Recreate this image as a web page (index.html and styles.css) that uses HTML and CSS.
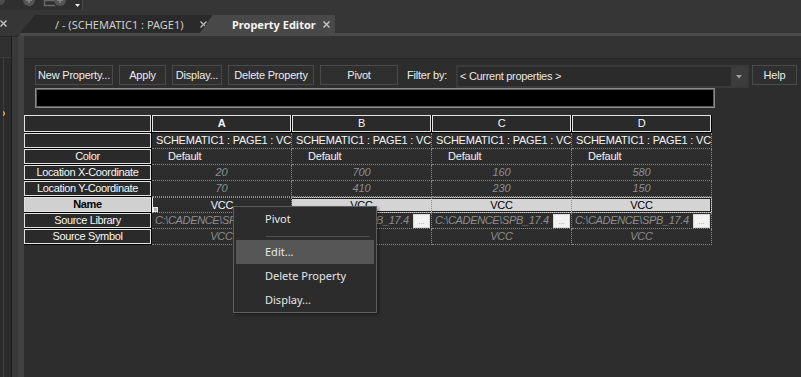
FILE: index.html
```html
<!DOCTYPE html>
<html>
<head>
<meta charset="utf-8">
<link rel="stylesheet" href="styles.css">
</head>
<body>
<div class="top">
  <div class="toolbar">
    <svg width="83" height="10" viewBox="0 0 83 10">
      <rect x="0" y="0" width="82" height="10" fill="#2f2f2f"/>
      <line x1="82.5" y1="0" x2="82.5" y2="10" stroke="#4a4a4a"/>
      <circle cx="0" cy="0" r="5" fill="#4d4d4d"/>
      <circle cx="29" cy="0" r="6" fill="#555"/>
      <path d="M29 -3V3M26 0H32" stroke="#8a8a8a" stroke-width="1.4"/>
      <path d="M55 0.5H44.5V5.5H55" fill="none" stroke="#6a6a6a" stroke-width="1.4"/>
      <circle cx="60" cy="0" r="6" fill="#555"/>
      <path d="M60 -3V3M57 0H63" stroke="#8a8a8a" stroke-width="1.4"/>
      <path d="M75 4H80L77.5 7Z" fill="#e8e8e8"/>
    </svg>
  </div>
  <div class="tabrow">
    <div class="side-close">
      <svg width="7" height="7" viewBox="0 0 7 7"><path d="M0.5 0.5L6.5 6.5M6.5 0.5L0.5 6.5" stroke="#c4c4c4" stroke-width="1.4"/></svg>
    </div>
    <div class="tab tab-doc">
      <span class="tab-label">/ - (SCHEMATIC1 : PAGE1)</span>
      <svg class="tab-x" width="7" height="7" viewBox="0 0 7 7"><path d="M0.5 0.5L6.5 6.5M6.5 0.5L0.5 6.5" stroke="#b8b8b8" stroke-width="1.4"/></svg>
    </div>
    <div class="tab tab-active">
      <span class="tab-label">Property Editor</span>
      <svg class="tab-x" width="7" height="7" viewBox="0 0 7 7"><path d="M0.5 0.5L6.5 6.5M6.5 0.5L0.5 6.5" stroke="#c8c8c8" stroke-width="1.4"/></svg>
    </div>
  </div>
</div>
<div class="tabline"></div>
<div class="workspace">
  <div class="leftpanel">
    <div class="lp-a">
      <div class="lp-a-head"></div>
      <div class="lp-a-body"><span class="lp-frag">P</span></div>
    </div>
    <div class="lp-b"></div>
    <div class="lp-c"></div>
  </div>
  <div class="main">
    <div class="main-head"></div>
    <div class="editor">
      <div class="btnrow">
        <div class="btn w-new">New Property...</div>
        <div class="btn w-apply">Apply</div>
        <div class="btn w-disp">Display...</div>
        <div class="btn w-del">Delete Property</div>
        <div class="btn w-pivot">Pivot</div>
        <div class="filter-label">Filter by:</div>
        <div class="combo">
          <div class="combo-text">&lt; Current properties &gt;</div>
          <div class="combo-arrow"><svg width="6" height="4" viewBox="0 0 6 4"><path d="M0 0H6L3 3.5Z" fill="#a0a0a0"/></svg></div>
        </div>
        <div class="btn w-help">Help</div>
      </div>
      <div class="cmdline"></div>
      <div class="grid">
        <div class="cell rh"></div>
        <div class="cell ch ch-cur">A</div>
        <div class="cell ch">B</div>
        <div class="cell ch">C</div>
        <div class="cell ch">D</div>

        <div class="cell rh"></div>
        <div class="cell d txt">SCHEMATIC1 : PAGE1 : VCC</div>
        <div class="cell d txt">SCHEMATIC1 : PAGE1 : VCC</div>
        <div class="cell d txt">SCHEMATIC1 : PAGE1 : VCC</div>
        <div class="cell d txt">SCHEMATIC1 : PAGE1 : VCC</div>

        <div class="cell rh">Color</div>
        <div class="cell d def">Default</div>
        <div class="cell d def">Default</div>
        <div class="cell d def">Default</div>
        <div class="cell d def">Default</div>

        <div class="cell rh">Location X-Coordinate</div>
        <div class="cell d num">20</div>
        <div class="cell d num">700</div>
        <div class="cell d num">160</div>
        <div class="cell d num">580</div>

        <div class="cell rh">Location Y-Coordinate</div>
        <div class="cell d num">70</div>
        <div class="cell d num">410</div>
        <div class="cell d num">230</div>
        <div class="cell d num">150</div>

        <div class="cell rh rh-sel">Name</div>
        <div class="cell d name-cur">VCC<span class="handle"></span></div>
        <div class="cell d name-sel">VCC</div>
        <div class="cell d name-sel">VCC</div>
        <div class="cell d name-sel name-end">VCC</div>

        <div class="cell rh">Source Library</div>
        <div class="cell d lib"><span class="lib-text">C:\CADENCE\SPB_17.4</span><span class="lib-btn">...</span></div>
        <div class="cell d lib"><span class="lib-text">C:\CADENCE\SPB_17.4</span><span class="lib-btn">...</span></div>
        <div class="cell d lib"><span class="lib-text">C:\CADENCE\SPB_17.4</span><span class="lib-btn">...</span></div>
        <div class="cell d lib"><span class="lib-text">C:\CADENCE\SPB_17.4</span><span class="lib-btn">...</span></div>

        <div class="cell rh">Source Symbol</div>
        <div class="cell d num">VCC</div>
        <div class="cell d num">VCC</div>
        <div class="cell d num">VCC</div>
        <div class="cell d num">VCC</div>
      </div>
    </div>
  </div>
</div>
<div class="ctxmenu">
  <div class="mi">Pivot</div>
  <div class="msep"></div>
  <div class="mi mi-hot">Edit...</div>
  <div class="mi">Delete Property</div>
  <div class="mi">Display...</div>
</div>
</body>
</html>
```

FILE: styles.css
```css
* { box-sizing: border-box; }
html, body { margin: 0; padding: 0; }
body {
  width: 801px;
  height: 377px;
  overflow: hidden;
  background: #363636;
  font-family: "Liberation Sans", Arial, sans-serif;
  position: relative;
}

/* ---------- top strip ---------- */
.top { height: 33px; }
.toolbar { width: 83px; height: 10px; }
.toolbar svg { display: block; }
.tabrow { display: flex; height: 18px; margin-top: 5px; }
.side-close { width: 20px; display: flex; align-items: center; padding-bottom: 2px; }
.side-close svg { display: block; }
.tab {
  display: flex;
  align-items: center;
  font-family: "Noto Sans", "Open Sans", sans-serif;
  font-size: 11px;
  white-space: nowrap;
}
.tab-label { flex: 1; }
.tab-x { display: block; margin-right: 5px; }
.tab-doc {
  width: 192px;
  background: #2a2a2a;
  clip-path: polygon(15px 0, 100% 0, calc(100% - 12px) 100%, 0 100%);
  padding-left: 35px;
  color: #cdcdcd;
}
.tab-active {
  width: 135px;
  margin-left: -12px;
  background: #484848;
  clip-path: polygon(13px 0, 100% 0, 100% 100%, 0 100%);
  padding-left: 32px;
  color: #f4f4f4;
  font-weight: 700;
}
.tabline { height: 3px; margin-left: 20px; background: #4a4a4a; }

/* ---------- workspace ---------- */
.workspace { display: flex; height: 341px; }
.leftpanel { width: 24px; display: flex; }
.lp-a {
  width: 12px;
  display: flex;
  flex-direction: column;
  border-top: 1px solid #252525;
  border-right: 1px solid #1c1c1c;
  background: #2b2b2b;
}
.lp-a-head { height: 21px; border-bottom: 1px solid #3c3c3c; background: #303030; }
.lp-a-body { flex: 1; border-left: 3px solid #2a2a2a; box-shadow: inset 1px 0 0 #3e3e3e; padding-top: 51px; overflow: hidden; }
.lp-frag { display: block; margin-left: -5px; font-size: 11px; line-height: 12px; color: #d8d8d8; }
.lp-b { width: 6px; background: #393939; border-top: 1px solid #2a2a2a; }
.lp-c { width: 6px; background: #424242; }

.main { flex: 1; display: flex; flex-direction: column; background: #333333; }
.main-head { height: 23px; border-bottom: 1px solid #282828; }
.editor { flex: 1; background: #2d2d2d; }

/* ---------- buttons ---------- */
.btnrow {
  display: flex;
  align-items: flex-start;
  gap: 6px;
  height: 29px;
  padding: 6px 0 0 11px;
}
.btn {
  height: 20px;
  border: 1px solid #4a4a4a;
  background: #2f2f2f;
  color: #ececec;
  font-size: 11px;
  letter-spacing: -0.2px;
  display: flex;
  align-items: center;
  justify-content: center;
  white-space: nowrap;
}
.w-new { width: 78px; }
.w-apply { width: 47px; }
.w-disp { width: 50px; }
.w-del { width: 86px; }
.w-pivot { width: 78px; }
.w-help { width: 45px; margin-left: -3px; }
.filter-label {
  width: 46px;
  height: 20px;
  line-height: 20px;
  padding-left: 3px;
  font-size: 11px;
  letter-spacing: -0.2px;
  color: #ececec;
  white-space: nowrap;
}
.combo {
  width: 293px;
  height: 23px;
  display: flex;
  border: 2px solid #393939;
  background: #2b2b2b;
}
.combo-text {
  flex: 1;
  padding-left: 2px;
  line-height: 19px;
  font-size: 11px;
  letter-spacing: -0.3px;
  color: #e8e8e8;
  white-space: nowrap;
}
.combo-arrow {
  width: 16px;
  background: #3c3c3c;
  display: flex;
  align-items: center;
  justify-content: center;
}
.combo-arrow svg { display: block; }

.cmdline {
  margin-left: 11px;
  width: 680px;
  height: 20px;
  background: #000;
  border: 1px solid #8a8a8a;
  box-shadow: inset 0 0 0 1px #5c5c5c;
}

/* ---------- grid ---------- */
.grid {
  margin-top: 7px;
  display: grid;
  grid-template-columns: 128px repeat(4, 140px);
  grid-template-rows: 18px repeat(7, 16px);
  font-size: 11px;
  letter-spacing: -0.2px;
}
.cell {
  position: relative;
  white-space: nowrap;
  overflow: hidden;
}
.rh, .ch {
  background: #2a2a2a;
  color: #f6f6f6;
  text-align: center;
  border-right: 1px solid #000;
  border-bottom: 1px solid #000;
  box-shadow: inset 0 0 0 1px #e2e2e2;
  line-height: 15px;
}
.rh { letter-spacing: -0.35px; }
.ch { line-height: 17px; }
.ch-cur { font-weight: 700; }
.rh-sel { background: #d0d0d0; color: #000; font-weight: 700; }

.d {
  border-right: 1px dotted #8a8a8a;
  border-bottom: 1px dotted #8a8a8a;
  line-height: 15px;
  color: #f4f4f4;
}
.txt { padding-left: 4px; }
.def { padding-left: 16px; }
.num { text-align: center; font-style: italic; color: #8e8e8e; }

.name-cur {
  text-align: center;
  border-left: 1px solid #ececec;
  border-top: 1px dotted #8a8a8a;
  line-height: 14px;
}
.handle {
  position: absolute;
  left: 0;
  bottom: 0;
  width: 5px;
  height: 5px;
  background: #b4b4b4;
  border: 1px solid #e8e8e8;
}
.name-sel {
  text-align: center;
  color: #000;
  background: #d4d4d4;
  border-top: 1px dotted #8a8a8a;
  box-shadow: inset 0 1px 0 #1e1e1e, inset 0 -1px 0 #1e1e1e;
  line-height: 14px;
}
.name-end { box-shadow: inset 0 1px 0 #1e1e1e, inset 0 -1px 0 #1e1e1e, inset -1px 0 0 #1e1e1e; }

.lib { display: flex; align-items: center; padding-left: 3px; padding-right: 1px; }
.lib-text { flex: 1; overflow: hidden; font-style: italic; color: #8e8e8e; letter-spacing: -0.35px; }
.lib-btn {
  width: 17px;
  height: 14px;
  flex: none;
  background: #f2f2f2;
  border: 1px solid #d8d8d8;
  color: #9a9a9a;
  font-size: 8px;
  line-height: 14px;
  text-align: center;
  letter-spacing: 0;
}

/* ---------- context menu ---------- */
.ctxmenu {
  position: absolute;
  left: 233px;
  top: 206px;
  width: 144px;
  height: 107px;
  background: #2c2c2c;
  border: 1px solid #5e5e5e;
  padding: 0 2px;
  box-shadow: 2px 2px 3px rgba(0, 0, 0, 0.35);
  font-family: "Noto Sans", "Open Sans", sans-serif;
  font-size: 11px;
  color: #e6e6e6;
}
.mi { height: 24px; line-height: 24px; padding-left: 29px; white-space: nowrap; }
.mi-hot { background: #565656; }
.msep { height: 9px; margin: 0 4px 0 30px; border-top: 1px solid #505050; transform: translateY(5px); }
```
